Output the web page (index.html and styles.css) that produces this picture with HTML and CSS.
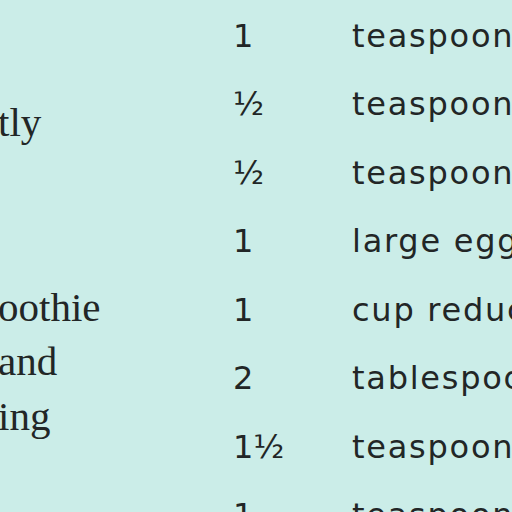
FILE: index.html
```html
<!DOCTYPE html>
<html>
<head>
<meta charset="utf-8">
<link rel="stylesheet" href="styles.css">
</head>
<body>
<div class="page">
  <div class="notes">
    <p class="note note-first">tly</p>
    <p class="note note-second">oothie<br>and<br>ing</p>
  </div>
  <div class="ingredients">
    <div class="qty">1</div><div class="item">teaspoon baking soda</div>
    <div class="qty">½</div><div class="item">teaspoon salt</div>
    <div class="qty">½</div><div class="item">teaspoon cinnamon</div>
    <div class="qty">1</div><div class="item">large egg</div>
    <div class="qty">1</div><div class="item">cup reduced-fat milk</div>
    <div class="qty">2</div><div class="item">tablespoons butter</div>
    <div class="qty">1½</div><div class="item">teaspoons vanilla</div>
    <div class="qty">1</div><div class="item">teaspoon lemon zest</div>
  </div>
</div>
</body>
</html>
```
FILE: styles.css
```css
html, body {
  margin: 0;
  padding: 0;
  background: #cbede8;
  overflow: hidden;
  height: 512px;
}
.page {
  display: grid;
  grid-template-columns: 233px 1fr;
  width: 512px;
  height: 512px;
  overflow: hidden;
  color: #222626;
}
.notes {
  overflow: hidden;
  font-family: "Liberation Serif", "Times New Roman", serif;
  font-size: 41px;
  line-height: 54.5px;
}
.note {
  margin: 0 0 0 -2px;
  white-space: nowrap;
}
.note-first {
  margin-top: 95px;
}
.note-second {
  margin-top: 130px;
}
.ingredients {
  display: grid;
  grid-template-columns: 119px 1fr;
  grid-auto-rows: 68.5px;
  padding-top: 1.5px;
  font-family: "DejaVu Sans", sans-serif;
  font-size: 32px;
  line-height: 68.5px;
  letter-spacing: 1.75px;
  white-space: nowrap;
  overflow: hidden;
}
.qty {
  letter-spacing: 0;
}
</style>
```
